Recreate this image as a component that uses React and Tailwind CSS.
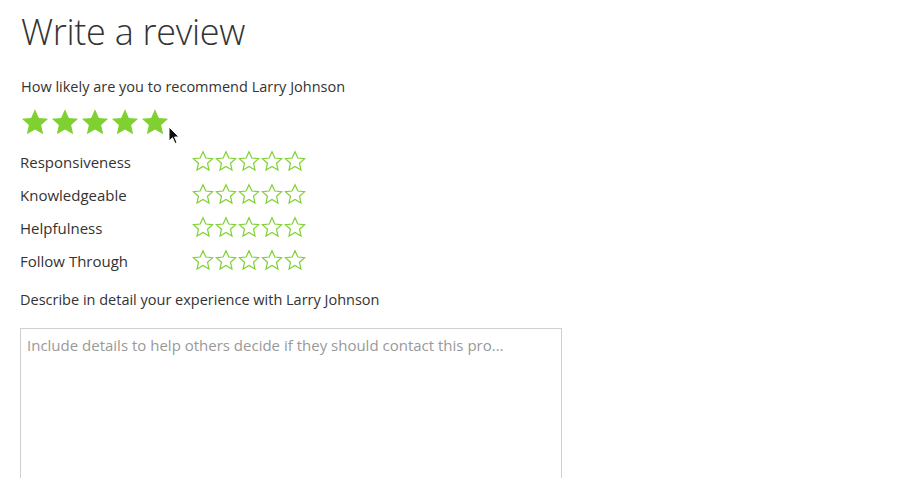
import React from "react";

const STAR = "M12 1.8l3.09 6.9 7.41.74-5.58 4.98 1.6 7.38L12 17.98l-6.52 3.82 1.6-7.38L1.5 9.44l7.41-.74z";

function BigStar() {
  return (
    <svg width="30" height="30" viewBox="0 0 24 24" className="shrink-0">
      <path d={STAR} fill="#7fd132" />
    </svg>
  );
}

function SmallStar() {
  return (
    <svg width="22" height="22" viewBox="0 0 24 24" className="shrink-0">
      <path d={STAR} fill="none" stroke="#7fd132" strokeWidth="1.3" strokeLinejoin="miter" />
    </svg>
  );
}

function Cursor() {
  return (
    <svg width="12" height="19" viewBox="0 0 12 19" className="absolute left-[168px] top-[126px]">
      <path d="M1 1 L1 15 L4.5 11.8 L7 17.5 L9 16.6 L6.6 11 L11 11 Z" fill="#111" stroke="#fff" strokeWidth="1" strokeLinejoin="round" />
    </svg>
  );
}

export default function App() {
  const rows = ["Responsiveness", "Knowledgeable", "Helpfulness", "Follow Through"];
  return (
    <div className="relative w-[914px] h-[478px] overflow-hidden bg-white text-[#333] pl-5" style={{ fontFamily: '"Open Sans", sans-serif' }}>
      <h1 className="text-[36px] font-light leading-none pt-[14px] ml-[1px] tracking-[-0.3px]">Write a review</h1>
      <p className="mt-[26px] ml-[1px] text-[14.5px] leading-5 pt-[1px]">How likely are you to recommend Larry Johnson</p>
      <div className="flex mt-[10px] ml-[0px] h-[30px]">
        <BigStar />
        <BigStar />
        <BigStar />
        <BigStar />
        <BigStar />
      </div>
      <Cursor />
      <div className="flex flex-col mt-[9px]">
        {rows.map((r) => (
          <div key={r} className="flex items-center h-[33px]">
            <span className="w-[172px] text-[15px]">{r}</span>
            <div className="flex gap-[1px] -mt-[4px]">
              <SmallStar />
              <SmallStar />
              <SmallStar />
              <SmallStar />
              <SmallStar />
            </div>
          </div>
        ))}
      </div>
      <p className="mt-[12px] text-[14.5px] leading-5">Describe in detail your experience with Larry Johnson</p>
      <div className="mt-[18px] w-[542px] h-[200px] border border-[#cfcfcf] px-[6px] pt-[4px]">
        <span className="text-[15px] text-[#999]">Include details to help others decide if they should contact this pro...</span>
      </div>
    </div>
  );
}
